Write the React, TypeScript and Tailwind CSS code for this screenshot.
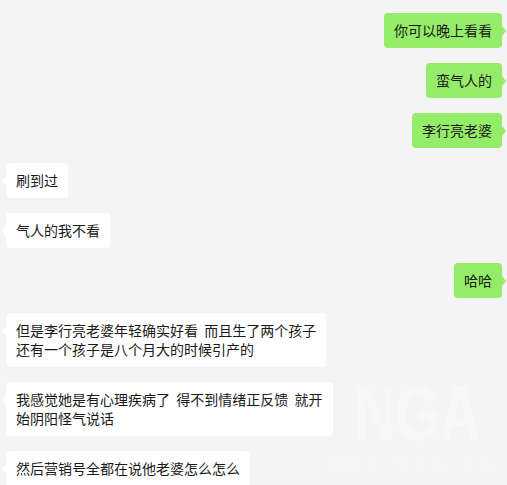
import React from "react";

type Msg = { text: string; mine?: boolean };

const messages: Msg[] = [
  { text: "你可以晚上看看", mine: true },
  { text: "蛮气人的", mine: true },
  { text: "李行亮老婆", mine: true },
  { text: "刷到过" },
  { text: "气人的我不看" },
  { text: "哈哈", mine: true },
  { text: "但是李行亮老婆年轻确实好看  而且生了两个孩子\n还有一个孩子是八个月大的时候引产的" },
  { text: "我感觉她是有心理疾病了  得不到情绪正反馈  就开\n始阴阳怪气说话" },
  { text: "然后营销号全都在说他老婆怎么怎么" },
];

function Bubble({ text, mine }: Msg) {
  return (
    <div className={mine ? "flex justify-end pr-[5px]" : "flex justify-start pl-[6px]"}>
      <div
        className={
          "relative rounded-[4px] px-[10px] py-2 text-[14px] leading-[19px] text-[#191919] whitespace-pre " +
          (mine ? "bg-[#95ec69]" : "bg-white")
        }
      >
        {text}
        {mine ? (
          <span className="absolute top-[13px] -right-[4px] w-0 h-0 border-y-[5px] border-y-transparent border-l-[4px] border-l-[#95ec69]" />
        ) : (
          <span className="absolute top-[13px] -left-[4px] w-0 h-0 border-y-[5px] border-y-transparent border-r-[4px] border-r-white" />
        )}
      </div>
    </div>
  );
}

export default function App() {
  return (
    <div
      className="relative w-[507px] h-[485px] overflow-hidden bg-[#f4f4f4]"
      style={{ fontFamily: '"Noto Sans CJK SC", "Noto Sans", sans-serif' }}
    >
      {/* faint site watermark */}
      <div className="absolute left-[343px] top-[378px] w-[147px] flex flex-col items-center select-none pointer-events-none">
        <div
          className="text-[78px] leading-[70px] font-bold tracking-[-2px] text-white/30 scale-x-75"
          style={{ fontFamily: '"Liberation Sans", sans-serif' }}
        >
          NGA
        </div>
        <div
          className="mt-[10px] text-[13px] leading-[13px] tracking-[9px] text-white/30"
          style={{ fontFamily: '"Liberation Sans", sans-serif' }}
        >
          BBS.NGA.CN
        </div>
      </div>

      <div className="relative flex flex-col gap-[15px] pt-[13px]">
        {messages.map((m, i) => (
          <Bubble key={i} {...m} />
        ))}
      </div>
    </div>
  );
}
